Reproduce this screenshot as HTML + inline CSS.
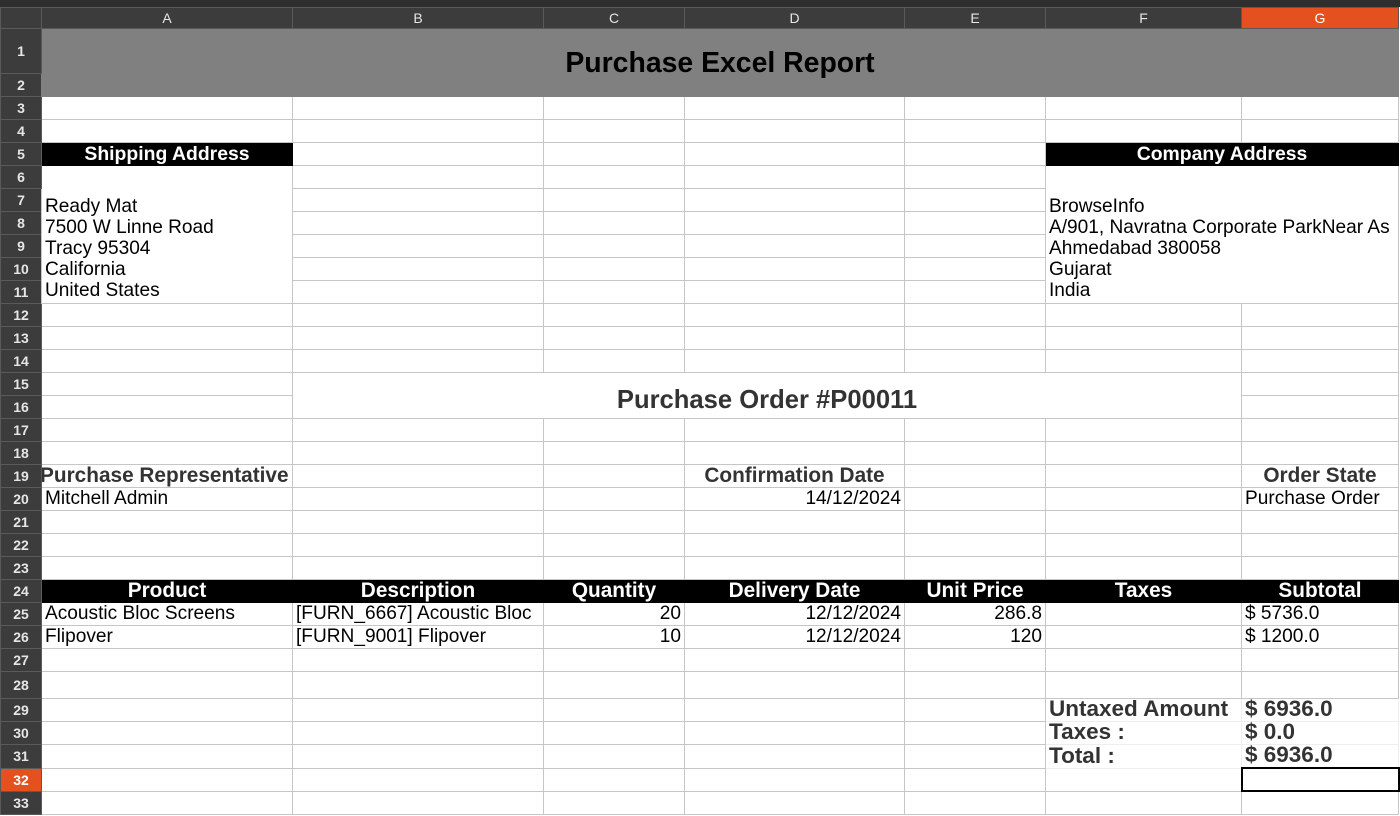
<!DOCTYPE html>
<html><head><meta charset="utf-8"><style>
body{margin:0;background:#fff;width:1400px;height:816px;overflow:hidden;font-family:"Liberation Sans",sans-serif;}
.top{height:7px;background:#2e2e2e;}
table{border-collapse:collapse;table-layout:fixed;width:1398px;}
td{border:1px solid #c6c6c6;padding:0 3px 1px 3px;font-size:19.1px;color:#000;white-space:nowrap;overflow:visible;line-height:20px;vertical-align:bottom;}
td.h{background:#3c3c3c;color:#e6e6e6;border:1px solid #5a5a5a;text-align:center;font-size:14px;font-weight:bold;padding:0;vertical-align:middle;}
tr.ch td{height:19px;font-weight:normal;font-size:14px;}
td.o{background:#e4511e;color:#fff;}
.blk{background:#000;color:#fff;font-weight:bold;text-align:center;border-color:#000;font-size:19.4px;}
.r{text-align:right}
.c{text-align:center}
.b19{font-weight:bold;font-size:20.8px;color:#333;line-height:19px;}
.tot{font-weight:bold;font-size:22.5px;color:#333;border-color:#eee;line-height:20px;}
</style></head><body>
<div class="top"></div>
<table>
<colgroup><col style="width:41px"><col style="width:251px"><col style="width:251px"><col style="width:141px"><col style="width:220px"><col style="width:141px"><col style="width:196px"><col style="width:157px"></colgroup>
<tr class="ch"><td class="h"></td><td class="h">A</td><td class="h">B</td><td class="h">C</td><td class="h">D</td><td class="h">E</td><td class="h">F</td><td class="h o">G</td></tr>
<tr style="height:45px"><td class="h">1</td><td colspan="7" rowspan="2" style="background:#808080;text-align:center;vertical-align:middle;font-weight:bold;font-size:28.4px;border-color:#808080;padding-bottom:0px">Purchase Excel Report</td></tr>
<tr style="height:23px"><td class="h">2</td></tr>
<tr style="height:23px"><td class="h">3</td><td></td><td></td><td></td><td></td><td></td><td></td><td></td></tr>
<tr style="height:23px"><td class="h">4</td><td></td><td></td><td></td><td></td><td></td><td></td><td></td></tr>
<tr style="height:23px"><td class="h">5</td><td class="blk">Shipping Address</td><td></td><td></td><td></td><td></td><td colspan="2" class="blk">Company Address</td></tr>
<tr style="height:23px"><td class="h">6</td><td rowspan="6" style="vertical-align:bottom;line-height:21px;padding-bottom:2px">Ready Mat<br>7500 W Linne Road<br>Tracy 95304<br>California<br>United States</td><td></td><td></td><td></td><td></td><td colspan="2" rowspan="6" style="vertical-align:bottom;line-height:21px;padding-bottom:2px;overflow:hidden;max-width:345px">BrowseInfo<br>A/901, Navratna Corporate ParkNear As<br>Ahmedabad 380058<br>Gujarat<br>India</td></tr>
<tr style="height:23px"><td class="h">7</td><td></td><td></td><td></td><td></td></tr>
<tr style="height:23px"><td class="h">8</td><td></td><td></td><td></td><td></td></tr>
<tr style="height:23px"><td class="h">9</td><td></td><td></td><td></td><td></td></tr>
<tr style="height:23px"><td class="h">10</td><td></td><td></td><td></td><td></td></tr>
<tr style="height:23px"><td class="h">11</td><td></td><td></td><td></td><td></td></tr>
<tr style="height:23px"><td class="h">12</td><td></td><td></td><td></td><td></td><td></td><td></td><td></td></tr>
<tr style="height:23px"><td class="h">13</td><td></td><td></td><td></td><td></td><td></td><td></td><td></td></tr>
<tr style="height:23px"><td class="h">14</td><td></td><td></td><td></td><td></td><td></td><td></td><td></td></tr>
<tr style="height:23px"><td class="h">15</td><td></td><td colspan="5" rowspan="2" style="text-align:center;vertical-align:middle;font-weight:bold;font-size:25.6px;color:#333;padding-top:10px">Purchase Order #P00011</td><td></td></tr>
<tr style="height:23px"><td class="h">16</td><td></td><td></td></tr>
<tr style="height:23px"><td class="h">17</td><td></td><td></td><td></td><td></td><td></td><td></td><td></td></tr>
<tr style="height:23px"><td class="h">18</td><td></td><td></td><td></td><td></td><td></td><td></td><td></td></tr>
<tr style="height:23px"><td class="h">19</td><td class="b19" style="padding-left:0;text-indent:-2px;overflow:hidden;padding-bottom:2px">Purchase Representative</td><td></td><td></td><td class="b19 c" style="padding-bottom:2px">Confirmation Date</td><td></td><td></td><td class="b19 c" style="padding-bottom:2px">Order State</td></tr>
<tr style="height:23px"><td class="h">20</td><td>Mitchell Admin</td><td></td><td></td><td class="r">14/12/2024</td><td></td><td></td><td>Purchase Order</td></tr>
<tr style="height:23px"><td class="h">21</td><td></td><td></td><td></td><td></td><td></td><td></td><td></td></tr>
<tr style="height:23px"><td class="h">22</td><td></td><td></td><td></td><td></td><td></td><td></td><td></td></tr>
<tr style="height:23px"><td class="h">23</td><td></td><td></td><td></td><td></td><td></td><td></td><td></td></tr>
<tr style="height:23px"><td class="h">24</td><td class="blk" style="font-size:20.8px">Product</td><td class="blk" style="font-size:20.8px">Description</td><td class="blk" style="font-size:20.8px">Quantity</td><td class="blk" style="font-size:20.8px">Delivery Date</td><td class="blk" style="font-size:20.8px">Unit Price</td><td class="blk" style="font-size:20.8px">Taxes</td><td class="blk" style="font-size:20.8px">Subtotal</td></tr>
<tr style="height:23px"><td class="h">25</td><td>Acoustic Bloc Screens</td><td style="overflow:hidden">[FURN_6667] Acoustic Bloc</td><td class="r">20</td><td class="r">12/12/2024</td><td class="r">286.8</td><td></td><td>$ 5736.0</td></tr>
<tr style="height:23px"><td class="h">26</td><td>Flipover</td><td>[FURN_9001] Flipover</td><td class="r">10</td><td class="r">12/12/2024</td><td class="r">120</td><td></td><td>$ 1200.0</td></tr>
<tr style="height:23px"><td class="h">27</td><td></td><td></td><td></td><td></td><td></td><td></td><td></td></tr>
<tr style="height:27px"><td class="h">28</td><td></td><td></td><td></td><td></td><td></td><td></td><td></td></tr>
<tr style="height:23px"><td class="h">29</td><td></td><td></td><td></td><td></td><td></td><td class="tot" style="overflow:hidden;padding-bottom:2px">Untaxed Amount</td><td class="tot" style="padding-bottom:2px">$ 6936.0</td></tr>
<tr style="height:23px"><td class="h">30</td><td></td><td></td><td></td><td></td><td></td><td class="tot" style="padding-bottom:2px">Taxes :</td><td class="tot" style="padding-bottom:2px">$ 0.0</td></tr>
<tr style="height:23px"><td class="h">31</td><td></td><td></td><td></td><td></td><td></td><td class="tot" style="padding-bottom:2px">Total :</td><td class="tot" style="padding-bottom:2px">$ 6936.0</td></tr>
<tr style="height:23px"><td class="h o">32</td><td></td><td></td><td></td><td></td><td></td><td></td><td style="border:2px solid #000"></td></tr>
<tr style="height:23px"><td class="h">33</td><td></td><td></td><td></td><td></td><td></td><td></td><td></td></tr>
</table>
</body></html>
